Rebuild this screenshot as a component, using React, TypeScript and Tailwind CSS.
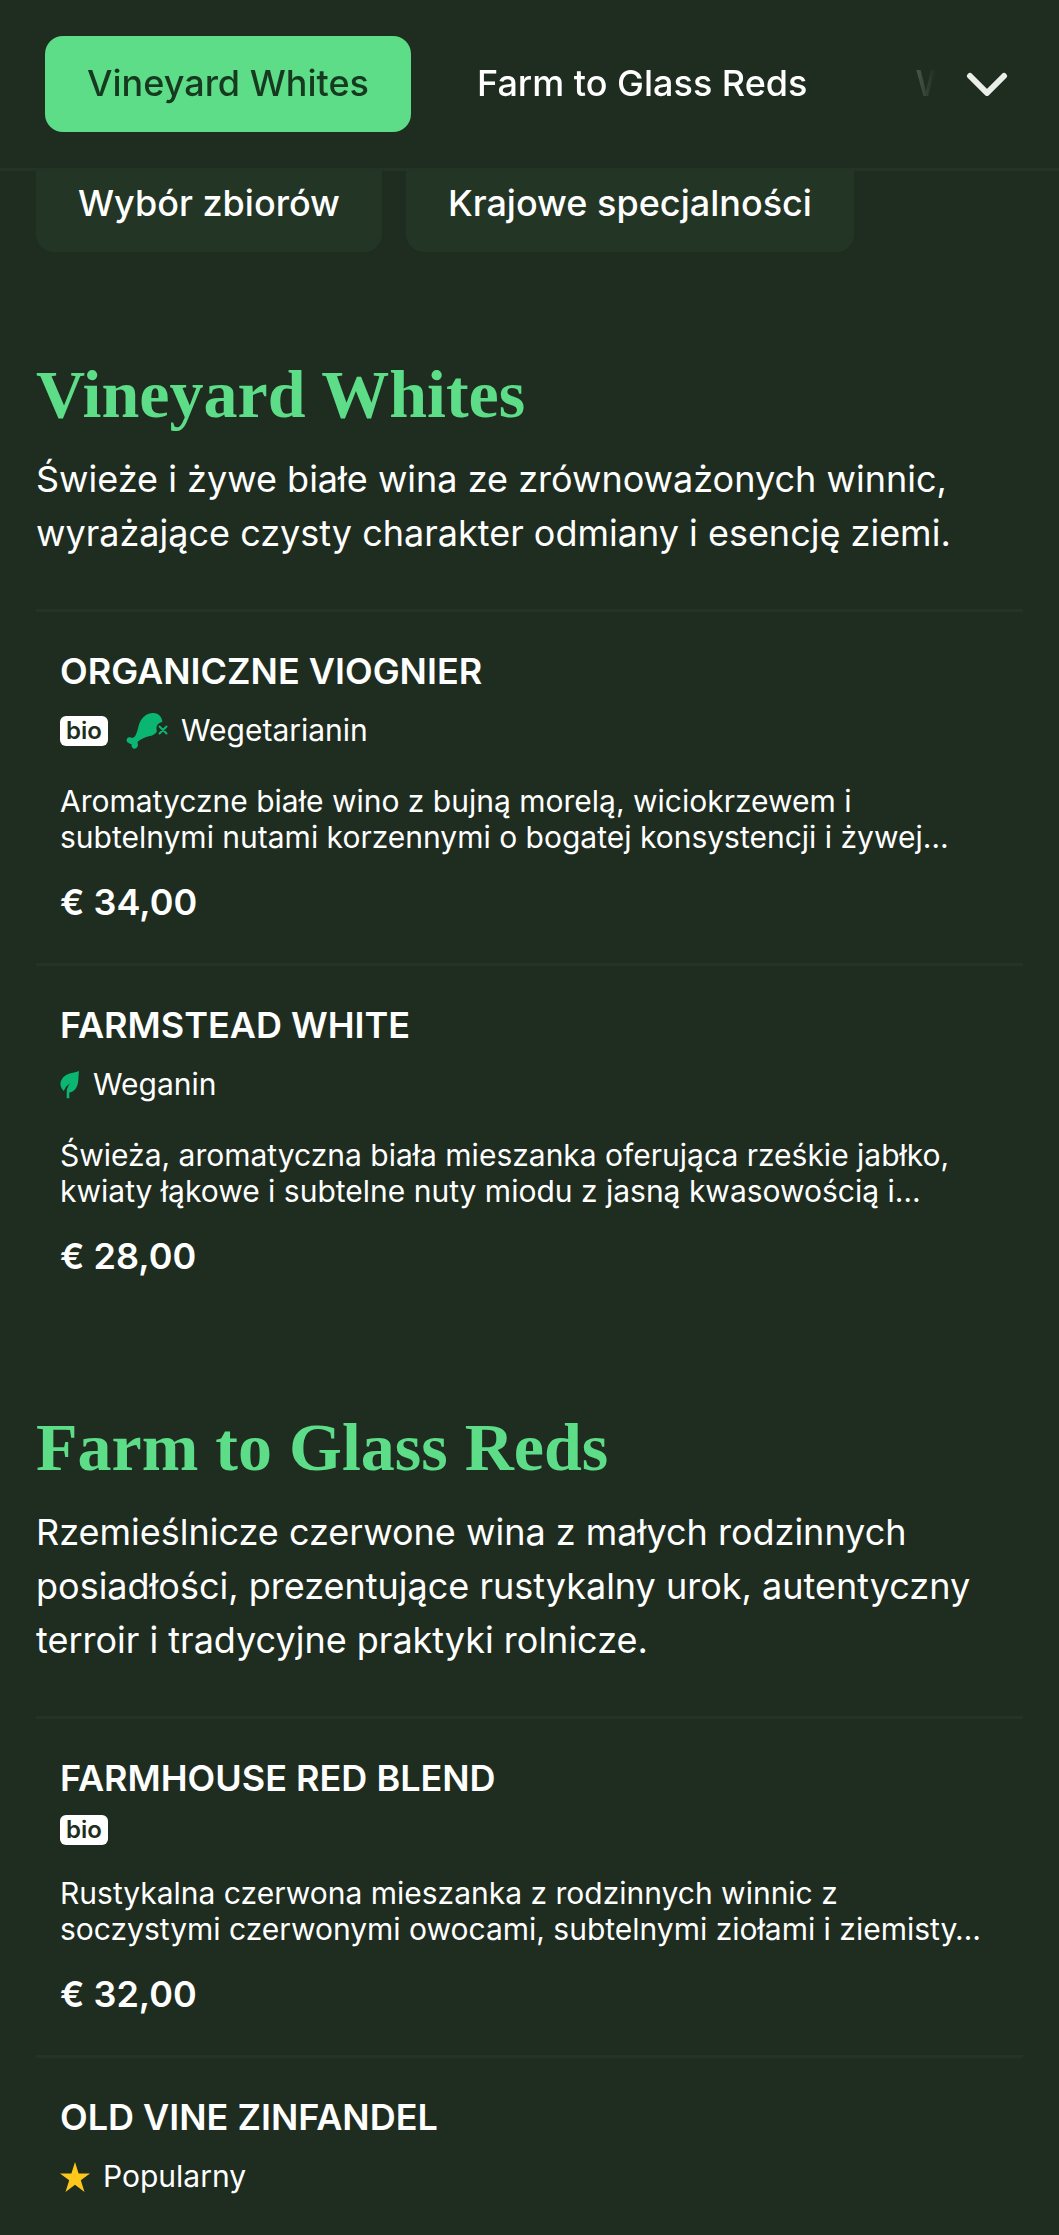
import React from "react";

type Tag = "bio" | "vegetarian" | "vegan" | "popular";

type Wine = {
  name: string;
  tags: Tag[];
  description?: string;
  price?: string;
};

type Section = {
  title: string;
  intro: string;
  wines: Wine[];
};

const sections: Section[] = [
  {
    title: "Vineyard Whites",
    intro:
      "Świeże i żywe białe wina ze zrównoważonych winnic, wyrażające czysty charakter odmiany i esencję ziemi.",
    wines: [
      {
        name: "ORGANICZNE VIOGNIER",
        tags: ["bio", "vegetarian"],
        description:
          "Aromatyczne białe wino z bujną morelą, wiciokrzewem i subtelnymi nutami korzennymi o bogatej konsystencji i żywej…",
        price: "€ 34,00",
      },
      {
        name: "FARMSTEAD WHITE",
        tags: ["vegan"],
        description:
          "Świeża, aromatyczna biała mieszanka oferująca rześkie jabłko, kwiaty łąkowe i subtelne nuty miodu z jasną kwasowością i…",
        price: "€ 28,00",
      },
    ],
  },
  {
    title: "Farm to Glass Reds",
    intro:
      "Rzemieślnicze czerwone wina z małych rodzinnych posiadłości, prezentujące rustykalny urok, autentyczny terroir i tradycyjne praktyki rolnicze.",
    wines: [
      {
        name: "FARMHOUSE RED BLEND",
        tags: ["bio"],
        description:
          "Rustykalna czerwona mieszanka z rodzinnych winnic z soczystymi czerwonymi owocami, subtelnymi ziołami i ziemisty…",
        price: "€ 32,00",
      },
      {
        name: "OLD VINE ZINFANDEL",
        tags: ["popular"],
      },
    ],
  },
];

const Drumstick = () => (
  <svg viewBox="0 0 42 36" className="h-9 w-[42px]" aria-hidden="true">
    <path
      fill="#0bb672"
      d="M27 0C30 0 32.500 1 34 3C35.500 5 36.300 7 36.300 9C33.500 9.500 31.500 11 30.700 13.500C30.200 15.300 30.500 17 31 18.300C30 20 28.700 21.300 27 22C25 23 22.500 23.300 20.300 24C17 25 13.500 27 11.500 29C11.800 30.500 12.300 32 11.500 33.500C10.800 35 9.500 35.800 8 35.700C6.300 35.500 5.300 33.500 5.500 31.200C4.500 31 3.500 30.500 2.300 29.800C.8 29 .3 27.500 .8 26.200C1.700 24.200 4 23.800 6.300 25C8 24.500 9 23.500 9.700 22C11 19.500 11.500 17 12.300 14C13.500 8.500 16 4.500 20 2C22 .7 24.500 0 27 0Z"
    />
    <path d="M33.500 13.500l7 7M40.500 13.500l-7 7" stroke="#0bb672" strokeWidth="2" strokeLinecap="round" />
  </svg>
);

const Leaf = () => (
  <svg viewBox="0 0 20 28" className="h-7 w-5" aria-hidden="true">
    <path
      fill="#0bb672"
      d="M19 0C15.500 1.800 10.500 1.500 6.700 3.700C3 5.800 .5 9 .5 13C.5 16 2 18.500 4 20C4.800 17.500 6.500 14.500 10 12.500C7.500 15.500 6.700 18.500 6.700 21V27.300H9.300V21.500C14 21 17 17 18 12C18.700 8 18.300 4 19 0Z"
    />
  </svg>
);

const Star = () => (
  <svg viewBox="0 0 30 30" className="size-[30px]" aria-hidden="true">
    <path
      fill="#fdc71b"
      d="M15 0L18.600 11.400H30L20.800 18.300L24.500 30L15 22.800L5.500 30L9.200 18.300L0 11.400H11.400Z"
    />
  </svg>
);

const TagLabel = ({ tag }: { tag: Tag }) => {
  if (tag === "bio") {
    return (
      <span className="flex h-[30px] w-12 items-center justify-center rounded-md bg-white text-2xl leading-none font-semibold text-[#1f2d21]">
        bio
      </span>
    );
  }
  return (
    <span className="flex items-center gap-[13px] text-3xl leading-[45px]">
      {tag === "vegetarian" && <Drumstick />}
      {tag === "vegan" && <Leaf />}
      {tag === "popular" && <Star />}
      {tag === "vegetarian" && "Wegetarianin"}
      {tag === "vegan" && "Weganin"}
      {tag === "popular" && "Popularny"}
    </span>
  );
};

const WineItem = ({ wine }: { wine: Wine }) => (
  <li className="border-t-3 border-[#233427] px-6 pt-8 pb-[34px]">
    <h3 className="text-4xl leading-[54px] font-semibold">{wine.name}</h3>
    <div className="mt-2.5 flex items-center gap-[18px]">
      {wine.tags.map((tag) => (
        <TagLabel key={tag} tag={tag} />
      ))}
    </div>
    {wine.description && (
      <p className="mt-[30px] text-3xl leading-9">{wine.description}</p>
    )}
    {wine.price && (
      <p className="mt-5 text-4xl leading-[54px] font-semibold">{wine.price}</p>
    )}
  </li>
);

const App = () => {
  return (
    <div className="h-screen overflow-hidden bg-[#1f2d21] font-['Inter',sans-serif] text-white">
      <header className="relative z-10 flex items-center border-b-3 border-[#233427] bg-[#1f2d21] py-9 pr-[51px] pl-[45px]">
        {/* tabs fade out towards the arrow */}
        <nav className="flex flex-1 gap-6 [mask-image:linear-gradient(to_left,transparent_18px,black_118px)]">
          <button className="h-24 shrink-0 rounded-[18px] bg-[#5ddd87] px-[42px] pb-0.5 text-4xl font-medium text-[#17391f]">
            Vineyard Whites
          </button>
          <button className="h-24 shrink-0 rounded-[18px] px-[42px] pb-0.5 text-4xl font-medium">
            Farm to Glass Reds
          </button>
          <button
            aria-label="Wybór zbiorów"
            className="h-24 shrink-0 pb-0.5 pl-[42px] text-4xl font-medium"
          >
            W
          </button>
        </nav>
        <button aria-label="Więcej" className="ml-3 shrink-0 text-[#ecefe9]">
          <svg viewBox="0 0 42 24" className="h-6 w-[42px]" fill="none" aria-hidden="true">
            <path
              d="M4 4L21 21L38 4"
              stroke="currentColor"
              strokeWidth="6"
              strokeLinecap="round"
              strokeLinejoin="round"
            />
          </svg>
        </button>
      </header>

      <main className="-mt-[15px] px-9">
        <div className="flex gap-6">
          <button className="h-24 rounded-[18px] bg-[#233525] px-[42px] pb-0.5 text-4xl font-medium">
            Wybór zbiorów
          </button>
          <button className="h-24 rounded-[18px] bg-[#233525] px-[42px] pb-0.5 text-4xl font-medium">
            Krajowe specjalności
          </button>
        </div>

        <div className="mt-[100px] flex flex-col gap-[88px]">
          {sections.map((section) => (
            <section key={section.title}>
              <h2 className="font-['Liberation_Serif',serif] text-[68px] leading-[84px] font-bold text-[#5ddd87]">
                {section.title}
              </h2>
              <p className="mt-4 text-4xl leading-[54px]">{section.intro}</p>
              <ul className="mt-[49px]">
                {section.wines.map((wine) => (
                  <WineItem key={wine.name} wine={wine} />
                ))}
              </ul>
            </section>
          ))}
        </div>
      </main>
    </div>
  );
};

export default App;
